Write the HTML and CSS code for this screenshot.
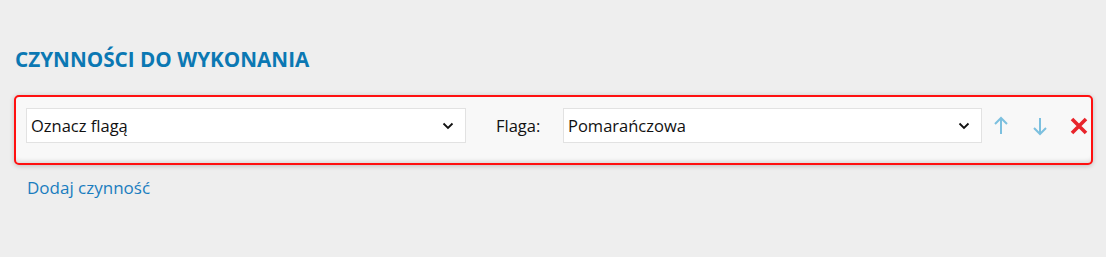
FILE: index.html
```html
<!DOCTYPE html>
<html lang="pl">
<head>
  <meta charset="UTF-8">
  <title>Czynności do wykonania</title>
  <link rel="stylesheet" href="styles.css">
</head>
<body>
  <!-- Lista czynności -->
  <div class="actions">
    <h2>CZYNNOŚCI DO WYKONANIA</h2>

    <div class="action-row">
      <div class="select-box select-action">
        <span>Oznacz flagą</span>
        <svg class="chevron" width="12" height="8" viewBox="0 0 12 8"><path d="M1.5 1.5 L6 6 L10.5 1.5" fill="none" stroke="#111" stroke-width="1.8"/></svg>
      </div>

      <label class="field-label">Flaga:</label>

      <div class="select-box select-flag">
        <span>Pomarańczowa</span>
        <svg class="chevron" width="12" height="8" viewBox="0 0 12 8"><path d="M1.5 1.5 L6 6 L10.5 1.5" fill="none" stroke="#111" stroke-width="1.8"/></svg>
      </div>

      <div class="row-buttons">
        <button class="icon-btn" title="W górę">
          <svg width="16" height="20" viewBox="0 0 16 20"><path d="M8 2 V18 M2 8 L8 2 L14 8" fill="none" stroke="#7cc0df" stroke-width="2"/></svg>
        </button>
        <button class="icon-btn" title="W dół">
          <svg width="16" height="20" viewBox="0 0 16 20"><path d="M8 2 V18 M2 12 L8 18 L14 12" fill="none" stroke="#7cc0df" stroke-width="2"/></svg>
        </button>
        <button class="icon-btn" title="Usuń">
          <svg width="20" height="20" viewBox="0 0 20 20"><path d="M3 3 L17 17 M17 3 L3 17" fill="none" stroke="#e8242b" stroke-width="3.6"/></svg>
        </button>
      </div>
    </div>

    <a href="#" class="add-link">Dodaj czynność</a>
  </div>
</body>
</html>
```

FILE: styles.css
```css
body {
  margin: 0;
  background: #eeeeee;
  font-family: "Segoe UI", "Open Sans", sans-serif;
  color: #111;
}

.actions {
  padding: 44px 13px 0 14px;
}

h2 {
  margin: 0 0 21px 1px;
  font-size: 20.7px;
  font-weight: 700;
  color: #0b78b3;
  line-height: 30px;
}

.action-row {
  display: flex;
  align-items: center;
  border: 2px solid #ff1010;
  border-radius: 5px;
  background: #f8f8f8;
  box-shadow: 0 1px 5px rgba(0, 0, 0, 0.2), inset 0 -5px 4px -3px rgba(0, 0, 0, 0.12);
  padding: 11px 4px 20px 10px;
}

.select-box {
  position: relative;
  flex-shrink: 0;
  box-sizing: border-box;
  height: 35px;
  background: #fff;
  border: 1px solid #e2e2e2;
  display: flex;
  align-items: center;
  padding-left: 4px;
  font-size: 16.5px;
}

.select-action {
  width: 440px;
}

.select-flag {
  width: 419px;
}

.chevron {
  position: absolute;
  right: 11px;
  top: 13px;
}

.field-label {
  flex-shrink: 0;
  font-size: 16.5px;
  margin-left: 30px;
  width: 67px;
}

.row-buttons {
  display: flex;
  gap: 18px;
  margin-left: 8px;
}

.icon-btn {
  border: none;
  background: none;
  padding: 0;
  width: 21px;
  height: 24px;
  display: flex;
  align-items: center;
  justify-content: center;
}

.add-link {
  display: inline-block;
  margin: 11px 0 0 13px;
  font-size: 17px;
  color: #1a7dbf;
  text-decoration: none;
}
```
